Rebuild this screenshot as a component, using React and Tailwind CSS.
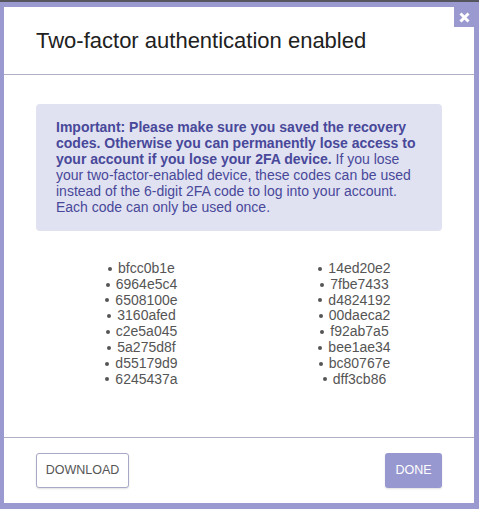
import React from "react";

const left = ["bfcc0b1e","6964e5c4","6508100e","3160afed","c2e5a045","5a275d8f","d55179d9","6245437a"];
const right = ["14ed20e2","7fbe7433","d4824192","00daeca2","f92ab7a5","bee1ae34","bc80767e","dff3cb86"];

function Code({ c }) {
  return (
    <li className="flex items-center justify-center h-[15.8px]">
      <span className="inline-block w-[4px] h-[4px] rounded-full bg-[#555555] mr-[6px]"></span>
      <span>{c}</span>
    </li>
  );
}

export default function App() {
  return (
    <div className="w-[479px] h-[509px] bg-[#9a9ad0] relative overflow-hidden" style={{ fontFamily: '"Liberation Sans", Arial, sans-serif' }}>
      <div className="h-[2px] bg-[#55555e]"></div>
      <div className="ml-[4px] mt-[5px] w-[470px] h-[496px] bg-white flex flex-col">
        <div className="h-[68px] border-b border-[#b0b0c4] px-[32px] flex items-center">
          <h1 className="text-[22px] text-[#212121] leading-none">Two-factor authentication enabled</h1>
        </div>
        <div className="flex-1 px-[32px] pt-[29px]">
          <div className="bg-[#e1e2f1] rounded-[4px] px-[20px] pt-[15px] pb-[16px] text-[14px] leading-[16px] text-[#48489a]">
            <b>Important: Please make sure you saved the recovery codes. Otherwise you can permanently lose access to your account if you lose your 2FA device.</b> If you lose your two-factor-enabled device, these codes can be used instead of the 6-digit 2FA code to log into your account. Each code can only be used once.
          </div>
          <div className="grid grid-cols-2 w-[426px] -ml-px mt-[30px] text-[14px] leading-[15.8px] text-[#555555]">
            <ul className="list-none">
              {left.map((c) => <Code key={c} c={c} />)}
            </ul>
            <ul className="list-none">
              {right.map((c) => <Code key={c} c={c} />)}
            </ul>
          </div>
        </div>
        <div className="h-[66px] border-t border-[#b0b0c4] px-[32px] flex items-center justify-between">
          <button className="h-[35px] w-[93px] border border-[#a8a8c8] rounded-[3px] text-[12.5px] text-[#555555] shadow-[0_1px_2px_rgba(0,0,0,0.12)] bg-white">DOWNLOAD</button>
          <button className="h-[35px] w-[57px] rounded-[3px] text-[12.5px] text-white bg-[#9898d0] shadow-[0_1px_2px_rgba(0,0,0,0.12)]">DONE</button>
        </div>
      </div>
      <div className="absolute right-[5px] top-[7px] w-[20px] h-[20px] bg-[#9a9ad0] flex items-center justify-center">
        <svg width="11" height="11" viewBox="0 0 11 11"><path d="M1.5 1.5L9.5 9.5M9.5 1.5L1.5 9.5" stroke="white" strokeWidth="3" strokeLinecap="butt" /></svg>
      </div>
    </div>
  );
}
